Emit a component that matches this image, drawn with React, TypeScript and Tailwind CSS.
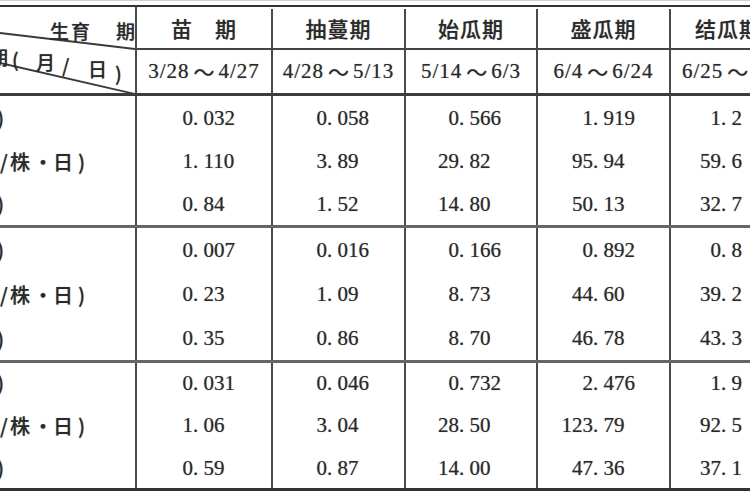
import React from "react";

const LINE = "border-[#4a4a4a]";

type Col = { w: string; pl: string; b: string };
const cols: Col[] = [
  { w: "w-[136px]", pl: "pl-[24px]", b: "border-r-2 border-[#4a4a4a]" },
  { w: "w-[133px]", pl: "pl-[22px]", b: "border-r-2 border-[#4a4a4a]" },
  { w: "w-[132px]", pl: "pl-[21px]", b: "border-r-2 border-[#4a4a4a]" },
  { w: "w-[133px]", pl: "pl-[23px]", b: "border-r-2 border-[#4a4a4a]" },
  { w: "w-[140px]", pl: "pl-[18px]", b: "" },
];

function Num({ v }: { v: string }) {
  const [i, f] = v.split(".");
  return (
    <div className="flex items-center leading-none">
      <span className="w-[32px] text-right">{i}</span>
      <span className="whitespace-pre">. {f}</span>
    </div>
  );
}

function Tail() {
  return (
    <div className="flex w-[4px] justify-end whitespace-nowrap font-['Noto_Sans_CJK_SC',sans-serif] text-[20px] font-medium leading-none">
      )
    </div>
  );
}

function Unit() {
  return (
    <div className="flex items-center whitespace-nowrap font-['Noto_Sans_CJK_SC',sans-serif] text-[20px] font-medium leading-none">
      <span className="w-[10px]">/</span>
      <span className="w-[23px]">株</span>
      <span className="w-[20px] text-center">・</span>
      <span className="w-[25px]">日</span>
      <span>)</span>
    </div>
  );
}

function Row({ h, label, vals }: { h: string; label: React.ReactNode; vals: string[] }) {
  return (
    <div className={`flex ${h}`}>
      <div className={`flex w-[137px] shrink-0 items-center overflow-hidden border-r-2 ${LINE}`}>{label}</div>
      {vals.map((v, k) => (
        <div key={k} className={`flex shrink-0 items-center ${cols[k].w} ${cols[k].pl} ${cols[k].b}`}>
          <Num v={v} />
        </div>
      ))}
    </div>
  );
}

const groups: { hs: string[]; vals: string[][] }[] = [
  {
    hs: ["h-[44px]", "h-[43px]", "h-[42px]"],
    vals: [
      ["0.032", "0.058", "0.566", "1.919", "1.2"],
      ["1.110", "3.89", "29.82", "95.94", "59.6"],
      ["0.84", "1.52", "14.80", "50.13", "32.7"],
    ],
  },
  {
    hs: ["h-[44px]", "h-[45px]", "h-[43px]"],
    vals: [
      ["0.007", "0.016", "0.166", "0.892", "0.8"],
      ["0.23", "1.09", "8.73", "44.60", "39.2"],
      ["0.35", "0.86", "8.70", "46.78", "43.3"],
    ],
  },
  {
    hs: ["h-[40px]", "h-[45px]", "h-[40px]"],
    vals: [
      ["0.031", "0.046", "0.732", "2.476", "1.9"],
      ["1.06", "3.04", "28.50", "123.79", "92.5"],
      ["0.59", "0.87", "14.00", "47.36", "37.1"],
    ],
  },
];

const heads = ["苗　期", "抽蔓期", "始瓜期", "盛瓜期", "结瓜期"];
const dates = ["3/28～4/27", "4/28～5/13", "5/14～6/3", "6/4～6/24", "6/25～"];

function Date({ d }: { d: string }) {
  const [a, b] = d.split("～");
  return (
    <span className="flex items-center whitespace-nowrap leading-none tracking-[1px]">
      <span>{a}</span>
      <span className="mx-[4px] font-['Noto_Sans_CJK_SC',sans-serif] tracking-normal">～</span>
      <span>{b}</span>
    </span>
  );
}

export default function App() {
  return (
    <div className="h-[500px] w-[750px] overflow-hidden bg-white font-['Liberation_Serif','Noto_Sans_CJK_SC',serif] text-[21px] text-[#2a2a2a] [text-shadow:0_0_1px_rgba(0,0,0,0.45)]">
      <div className="h-px w-[900px] bg-[#cfcfcf]" />
      <div className="h-[4px]" />
      <div className="h-[2px] w-[900px] bg-[#333]" />
      {/* header */}
      <div className="flex">
        <div className={`relative h-[86px] w-[137px] shrink-0 border-r-2 ${LINE} font-['Noto_Sans_CJK_SC',sans-serif] text-[19px] font-medium leading-none`}>
          <svg className="absolute left-0 top-0" width="135" height="86" viewBox="0 0 135 86">
            <line x1="0" y1="26" x2="135" y2="42" stroke="#3a3a3a" strokeWidth="1.8" />
            <line x1="0" y1="56" x2="135" y2="87" stroke="#3a3a3a" strokeWidth="1.8" />
          </svg>
          <span className="absolute left-[50px] top-[14px]">生</span>
          <span className="absolute left-[71px] top-[14px]">育</span>
          <span className="absolute left-[116px] top-[14px]">期</span>
          <span className="absolute left-[-11px] top-[40px]">期</span>
          <span className="absolute left-[12px] top-[42px]">(</span>
          <span className="absolute left-[36px] top-[45px]">月</span>
          <span className="absolute left-[62px] top-[48px]">/</span>
          <span className="absolute left-[88px] top-[52px]">日</span>
          <span className="absolute left-[115px] top-[56px]">)</span>
        </div>
        <div className="flex flex-col">
          <div className="flex h-[41px] pt-[2px]">
            {heads.map((t, k) => (
              <div
                key={k}
                className={`flex shrink-0 items-center font-['Noto_Sans_CJK_SC',sans-serif] font-medium leading-none ${cols[k].w} ${cols[k].b} ${
                  k === 4 ? "justify-start whitespace-nowrap pl-[24px] tracking-[1px]" : "justify-center tracking-[1px]"
                }`}
              >
                {t}
              </div>
            ))}
          </div>
          <div className="h-[2px] w-[800px] bg-[#444]" />
          <div className="flex h-[43px]">
            {dates.map((d, k) => (
              <div
                key={k}
                className={`flex shrink-0 items-center ${cols[k].w} ${cols[k].b} ${k === 4 ? "justify-start pl-[11px]" : "justify-center"}`}
              >
                <Date d={d} />
              </div>
            ))}
          </div>
        </div>
      </div>
      <div className="h-[3px] w-[900px] bg-[#3c3c3c]" />
      {groups.map((g, gi) => (
        <div key={gi}>
          {g.vals.map((vals, ri) => (
            <Row key={ri} h={g.hs[ri]} label={ri === 1 ? <Unit /> : <Tail />} vals={vals} />
          ))}
          {gi < 2 ? (
            <div className="h-[3px] w-[900px] bg-[#666]" />
          ) : (
            <div className="h-[3px] w-[900px] bg-[#333]" />
          )}
        </div>
      ))}
    </div>
  );
}
